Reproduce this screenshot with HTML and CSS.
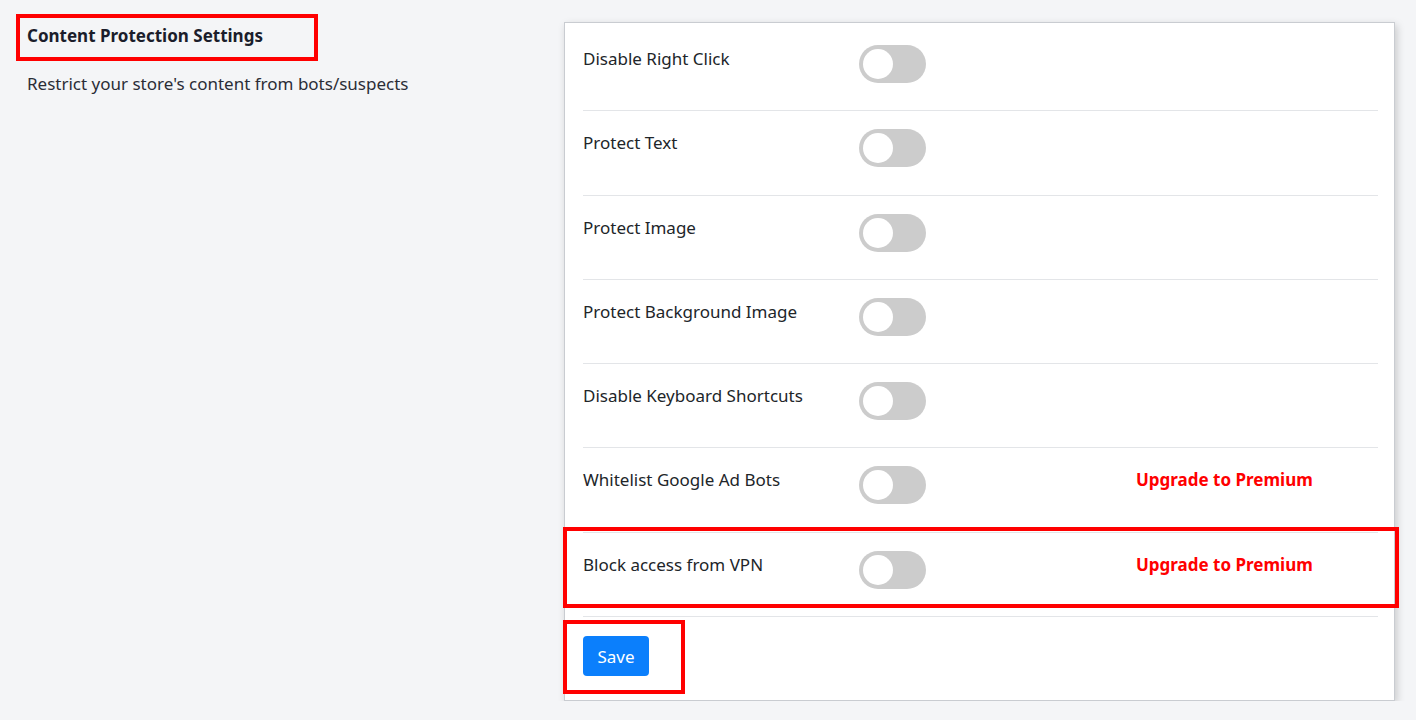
FILE: index.html
```html
<!DOCTYPE html>
<html lang="en">
<head>
<meta charset="utf-8">
<title>Content Protection Settings</title>
<link rel="stylesheet" href="styles.css">
</head>
<body>
<div class="page">
  <aside class="intro">
    <h2 class="intro-title">Content Protection Settings</h2>
    <p class="intro-desc">Restrict your store's content from bots/suspects</p>
  </aside>
  <section class="card">
    <div class="row">
      <span class="label">Disable Right Click</span>
      <span class="switch"><span class="knob"></span></span>
      <span></span>
    </div>
    <div class="row">
      <span class="label">Protect Text</span>
      <span class="switch"><span class="knob"></span></span>
      <span></span>
    </div>
    <div class="row">
      <span class="label">Protect Image</span>
      <span class="switch"><span class="knob"></span></span>
      <span></span>
    </div>
    <div class="row">
      <span class="label">Protect Background Image</span>
      <span class="switch"><span class="knob"></span></span>
      <span></span>
    </div>
    <div class="row">
      <span class="label">Disable Keyboard Shortcuts</span>
      <span class="switch"><span class="knob"></span></span>
      <span></span>
    </div>
    <div class="row">
      <span class="label">Whitelist Google Ad Bots</span>
      <span class="switch"><span class="knob"></span></span>
      <span class="premium">Upgrade to Premium</span>
    </div>
    <div class="row marked">
      <span class="label">Block access from VPN</span>
      <span class="switch"><span class="knob"></span></span>
      <span class="premium">Upgrade to Premium</span>
      <span class="annot annot-row"></span>
    </div>
    <div class="actions">
      <button class="btn-save" type="button">Save</button>
      <span class="annot annot-save"></span>
    </div>
  </section>
</div>
</body>
</html>
```
FILE: styles.css
```css
html, body {
  margin: 0;
  padding: 0;
}
body {
  background: #f4f5f7;
  font-family: "Noto Sans", "Open Sans", "DejaVu Sans", sans-serif;
  font-size: 17px;
  color: #212529;
}
.page {
  display: flex;
  align-items: flex-start;
  padding: 22px 21px 0 16px;
}
.intro {
  width: 548px;
  flex: none;
  margin-top: -8px;
}
.intro-title {
  display: inline-block;
  margin: 0;
  border: 4px solid #ff0000;
  padding: 7px 51px 10px 7px;
  font-size: 17px;
  line-height: 22px;
  font-weight: 700;
  color: #1b1d2b;
}
.intro-desc {
  margin: 11px 0 0 11px;
  line-height: 24px;
  color: #2b2d36;
}
.card {
  flex: 1;
  background: #ffffff;
  border: 1px solid #c9ccd1;
  box-shadow: 2px 3px 8px rgba(0, 0, 0, 0.18);
  padding: 4px 16px 0 18px;
}
.row {
  position: relative;
  display: grid;
  grid-template-columns: 276px 277px 1fr;
  align-items: start;
  padding: 18px 0 27.3px;
  border-bottom: 1px solid #e3e5e8;
}
.label {
  margin-top: 2px;
  line-height: 24px;
  color: #212529;
}
.switch {
  position: relative;
  display: block;
  width: 67px;
  height: 38px;
  border-radius: 19px;
  background: #cccccc;
}
.knob {
  position: absolute;
  left: 4px;
  top: 4px;
  width: 30px;
  height: 30px;
  border-radius: 50%;
  background: #ffffff;
}
.premium {
  margin-top: 2px;
  line-height: 24px;
  font-weight: 700;
  color: #ff0000;
}
.actions {
  position: relative;
  padding: 19px 0 24px;
}
.btn-save {
  display: block;
  width: 66px;
  height: 40px;
  border: 0;
  border-radius: 4px;
  background: #0b7ffc;
  color: #ffffff;
  font-family: inherit;
  font-size: 17px;
  padding: 0;
}
.annot {
  position: absolute;
  border: 4px solid #ff0000;
  pointer-events: none;
}
.annot-row {
  left: -20px;
  right: -21px;
  top: -6px;
  bottom: 8px;
}
.annot-save {
  left: -20px;
  top: 3px;
  width: 114px;
  height: 66px;
}
```
